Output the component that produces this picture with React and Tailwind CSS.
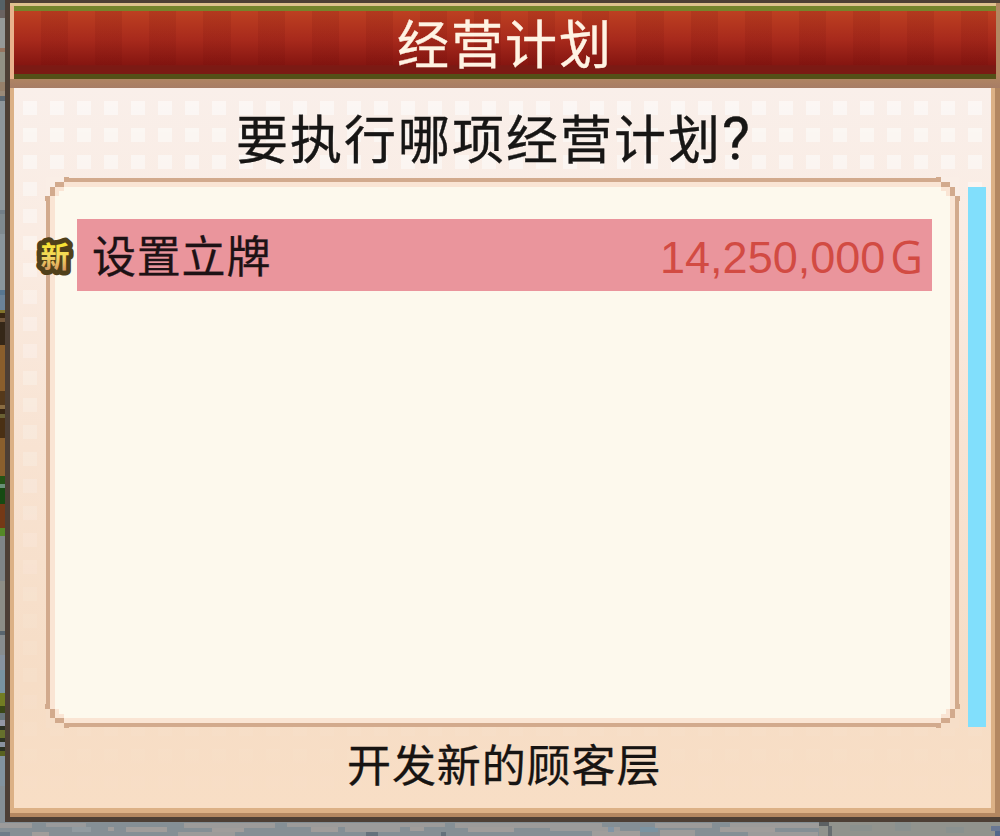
// Business plan dialog, drawn over the street map

const cjk = "font-['Noto_Sans_CJK_SC','Noto_Sans',sans-serif]";

// Map rows seen left of the window: [height, colour]
const sideRows = [
    [10, '#566266'], [8, '#6a6260'], [30, '#969a98'], [4, '#96745f'],
    [30, '#929184'], [9, '#96806a'], [5, '#9a8a78'], [5, '#5c6872'], [109, '#8e969b'],
    [4, '#737e88'], [20, '#7f898f'], [56, '#8a959c'], [5, '#587690'], [15, '#6b8298'], [3, '#81742d'],
    [5, '#3a2712'], [4, '#72563a'], [23, '#352718'], [46, '#8a5e2c'],
    [14, '#55391b'], [4, '#8a6c42'], [5, '#392613'], [4, '#6a6134'],
    [20, '#4a3014'], [38, '#8a5f2d'], [8, '#245315'], [4, '#699078'],
    [16, '#174a12'], [24, '#743916'], [8, '#558826'], [45, '#7f8587'],
    [50, '#8d8e86'], [4, '#59656e'], [20, '#888d8f'], [15, '#8793a0'], [23, '#7894a2'],
    [13, '#727d23'], [7, '#3a4717'], [7, '#69757a'], [6, '#9496a5'], [4, '#2d3024'],
    [8, '#66702c'], [4, '#2e3424'], [5, '#8992a0'], [4, '#2c3224'], [5, '#596220'], [30, '#82939f'],
];

// Paving patches below the window: [x, y, width, height, colour]
const paving = [
    [0, 1, 32, 5, '#9c9b9a'], [46, 1, 40, 4, '#999a9b'], [72, 5, 19, 5, '#929ba0'],
    [108, 5, 6, 4, '#a09d9b'], [126, 5, 41, 5, '#a09d9b'], [184, 1, 91, 5, '#9c9b9a'],
    [212, 6, 32, 4, '#a09d9b'], [32, 10, 17, 4, '#a09d9b'], [0, 10, 10, 4, '#6e7b88'],
    [287, 1, 158, 4, '#9c9b9a'], [311, 5, 27, 5, '#a09d9b'], [178, 10, 57, 4, '#9c9b9a'],
    [345, 5, 55, 5, '#9c9b9a'], [366, 10, 12, 4, '#65717c'], [410, 5, 14, 4, '#a09d9b'],
    [441, 10, 5, 4, '#65717c'], [455, 1, 147, 5, '#9c9b9a'], [468, 5, 46, 5, '#a09d9b'],
    [550, 5, 70, 4, '#9c9b9a'], [592, 9, 48, 5, '#a09d9b'], [608, 5, 6, 5, '#8295a5'],
    [640, 5, 18, 5, '#7b93a1'], [655, 1, 57, 5, '#9c9b9a'], [660, 8, 35, 6, '#9c9b9a'],
    [730, 1, 90, 5, '#9c9b9a'], [720, 5, 55, 5, '#a09d9b'], [748, 10, 70, 4, '#9c9b9a'],
    [819, 0, 181, 14, '#91938d'], [819, 0, 10, 4, '#5c6062'], [828, 4, 4, 10, '#686e71'],
    [850, 3, 22, 6, '#8b918e'], [895, 0, 16, 9, '#8a918f'], [946, 5, 18, 6, '#8a918f'],
    [991, 4, 9, 5, '#687793'], [995, 9, 5, 5, '#52678b'],
];

function StreetMap() {
    return (
        <>
            <div className="absolute left-0 top-0 w-[5px] h-[836px] overflow-hidden">
                {sideRows.map(([height, color], i) => (
                    <div key={i} style={{ height, background: color }} />
                ))}
            </div>
            <svg className="absolute left-0 top-[822px]" width="1000" height="14" shapeRendering="crispEdges">
                <rect width="1000" height="14" fill="#858f95" />
                {paving.map(([x, y, w, h, fill], i) => (
                    <rect key={i} x={x} y={y} width={w} height={h} fill={fill} />
                ))}
            </svg>
        </>
    );
}

function TitleBar() {
    return (
        <div className="h-[85px] bg-gradient-to-b from-[#b38761] from-85% to-[#a77d66]">
            <div className="h-[76px] mr-1 pt-[3px] pl-1 bg-[linear-gradient(to_bottom,#dfc28e_3px,#e9b28d_3px)]">
                <div className="h-[73px] flex flex-col bg-[#7b1912]">
                    <div className="h-[5px] shrink-0 bg-[#75842c]" />
                    <div className="h-[63px] shrink-0 relative bg-[linear-gradient(to_bottom,#bd4021,#a82a1c_45%,#861611_85%,#7b1a14_87%,#7b1a14)]">
                        <div className="absolute inset-x-0 top-0 h-[54px] bg-[repeating-linear-gradient(to_right,transparent_0px,transparent_27px,rgba(95,5,5,0.11)_27px,rgba(95,5,5,0.11)_54.13px)]" />
                        <h1 className={`relative text-center text-[52px] tracking-[2px] leading-[62px] text-[#fff3e3] [-webkit-text-stroke:0.4px] ${cjk}`}>经营计划</h1>
                    </div>
                    <div className="h-[5px] shrink-0 bg-[#545018]" />
                </div>
            </div>
        </div>
    );
}

// Stepped pixel corner, mirrored by the caller for the other three
function Corner({ className }) {
    return (
        <svg className={`absolute ${className}`} width="24" height="24" shapeRendering="crispEdges">
            <path d="M5 24V19H10V10H19V5H24V24Z" fill="#fdf9ed" />
            <path d="M5 19H10V10H19V5H24V10H19V14H14V19H10V24H5Z" fill="#fae5d4" />
            <path d="M0 24V19H5V24ZM5 19V10H10V19ZM10 10V5H19V10ZM19 5V0H24V5Z" fill="#d2aa8d" />
        </svg>
    );
}

function NewBadge() {
    return (
        <svg className="absolute -left-[16px] top-[50px]" width="52" height="60" aria-label="新">
            <defs>
                <linearGradient id="gold" x1="0" y1="0" x2="0" y2="1">
                    <stop offset="0.2" stopColor="#f8e52c" />
                    <stop offset="0.55" stopColor="#f3d861" />
                    <stop offset="0.85" stopColor="#d99b62" />
                </linearGradient>
            </defs>
            <text
                x="25" y="41" textAnchor="middle" fontSize="29" fontWeight="700"
                fill="url(#gold)" stroke="#50401a" strokeWidth="10" strokeLinejoin="round" paintOrder="stroke"
                className={cjk}
            >
                新
            </text>
        </svg>
    );
}

function PlanRow({ name, price }) {
    return (
        <button className={`h-[72px] w-full pt-px pl-[15px] pr-[9px] flex items-center bg-[#ea959c] text-[44px] leading-[72px] ${cjk}`}>
            <span className="-mt-[3px] tracking-[0.8px] text-[#1d1215] [-webkit-text-stroke:0.3px]">{name}</span>
            <span className="ml-auto mt-[5px] text-[45px] text-[#d24b43] font-['Liberation_Sans',sans-serif]">{price}</span>
            <span className="ml-[5px] mt-[2px] text-[45px] text-[#d24b43] font-['Open_Sans','Noto_Sans',sans-serif]">G</span>
        </button>
    );
}

function PlanList() {
    return (
        <div className="relative w-[913px] h-[551px] py-px">
            <div className="h-full border-4 border-[#d2aa8d] bg-[#fdf9ed]">
                <div className="h-full border-[5px] border-[#fae5d4] pt-[32px] pl-[22px] pr-[18px]">
                    <PlanRow name="设置立牌" price="14,250,000" />
                </div>
            </div>
            <CornerMasks />
            <NewBadge />
        </div>
    );
}

function CornerMasks() {
    return (
        <>
            <div className="absolute left-0 top-0 size-[23px] bg-[#faeee6]" />
            <div className="absolute right-0 top-0 size-[23px] bg-[#faeee6]" />
            <div className="absolute left-0 bottom-0 size-[23px] bg-[#f6dec8]" />
            <div className="absolute right-0 bottom-0 size-[23px] bg-[#f6dec8]" />
            <Corner className="-left-px top-0" />
            <Corner className="-right-px top-0 -scale-x-100" />
            <Corner className="-left-px bottom-0 -scale-y-100" />
            <Corner className="-right-px bottom-0 -scale-100" />
        </>
    );
}

function DotPattern() {
    return (
        <svg className="absolute left-0 top-0" width="977" height="720" shapeRendering="crispEdges">
            <defs>
                <pattern id="dots" x="9" y="13" width="27" height="27" patternUnits="userSpaceOnUse">
                    <rect width="14" height="14" fill="#fcfaf8" />
                </pattern>
                <linearGradient id="fade" x1="0" y1="0" x2="0" y2="1">
                    <stop offset="0" stopColor="#fff" stopOpacity="0.75" />
                    <stop offset="0.3" stopColor="#fff" stopOpacity="0.35" />
                    <stop offset="0.7" stopColor="#fff" stopOpacity="0.1" />
                    <stop offset="1" stopColor="#fff" stopOpacity="0.01" />
                </linearGradient>
                <mask id="dotFade">
                    <rect width="977" height="720" fill="url(#fade)" />
                </mask>
            </defs>
            <rect width="977" height="720" fill="url(#dots)" mask="url(#dotFade)" />
        </svg>
    );
}

export default function App() {
    return (
        <div className="relative w-[1000px] h-[836px] overflow-hidden bg-[#858f95]">
            <StreetMap />
            <div className="relative ml-[5px] h-[822px] pt-[3px] pl-[5px] pb-[5px] bg-[#4d3f35]">
                <div className="h-[814px] bg-[#b38761]">
                    <TitleBar />
                    <div className="h-[725px] mr-[5px] pl-1 pr-1 pb-[5px] bg-[#dcb186]">
                        <div className="relative h-[720px] bg-[linear-gradient(to_bottom,#f9efea,#faece3_20%,#f8e3d2_50%,#f6ddc6_82%,#f8dec5)]">
                            <DotPattern />
                            <div className="relative flex flex-col">
                                <h2 className={`h-[89px] pt-[10px] pl-[222px] text-[52px] tracking-[2px] leading-[78px] whitespace-nowrap text-[#171615] [-webkit-text-stroke:0.4px] ${cjk}`}>
                                    要执行哪项经营计划<span className="text-[59px] leading-none font-[Roboto,'Noto_Sans',sans-serif]">?</span>
                                </h2>
                                <div className="flex pl-8">
                                    <PlanList />
                                    <div className="ml-[9px] mt-[10px] w-[18px] h-[540px] bg-[#81dffc]" />
                                </div>
                                <p className={`pl-[333px] -mt-px text-[44px] tracking-[0.9px] leading-[72px] text-[#171412] [-webkit-text-stroke:0.3px] ${cjk}`}>开发新的顾客层</p>
                            </div>
                        </div>
                    </div>
                </div>
            </div>
        </div>
    );
}
